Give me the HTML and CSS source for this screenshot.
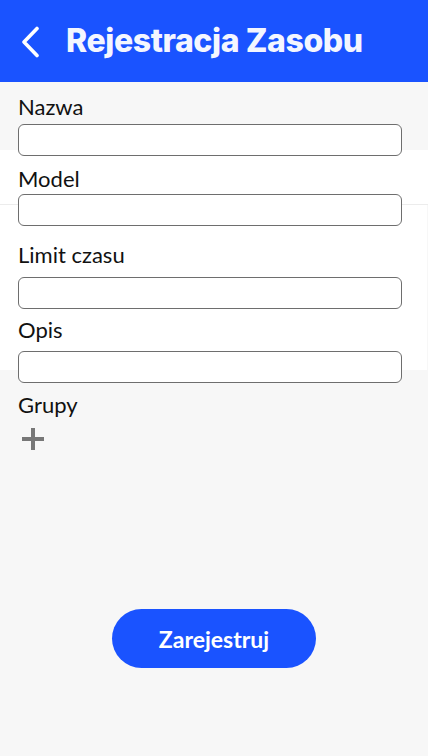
FILE: index.html
```html
<!DOCTYPE html>
<html lang="pl">
<head>
<meta charset="utf-8">
<title>Rejestracja Zasobu</title>
<link rel="stylesheet" href="styles.css">
</head>
<body>
<header class="topbar">
  <button class="back" aria-label="Wstecz">
    <svg width="20" height="32" viewBox="0 0 20 32"><path d="M15 2.5 L2 16 L15 29.5" fill="none" stroke="#fff" stroke-width="3.6" stroke-linecap="round" stroke-linejoin="round"/></svg>
  </button>
  <h1 class="title">Rejestracja Zasobu</h1>
</header>
<main class="form">
  <div class="field field-1">
    <label class="label">Nazwa</label>
    <input class="input" type="text">
  </div>
  <div class="field field-2">
    <label class="label">Model</label>
    <input class="input" type="text">
  </div>
  <div class="field field-3">
    <label class="label">Limit czasu</label>
    <input class="input" type="text">
  </div>
  <div class="field field-4">
    <label class="label">Opis</label>
    <input class="input" type="text">
  </div>
  <div class="groups">
    <span class="label">Grupy</span>
    <button class="add" aria-label="Dodaj grupę">
      <svg width="22" height="24" viewBox="0 0 22 24"><path d="M11 1 V23 M0 12 H22" stroke="#777" stroke-width="4"/></svg>
    </button>
  </div>
  <div class="actions">
    <button class="submit">Zarejestruj</button>
  </div>
</main>
</body>
</html>
```
FILE: styles.css
```css
* { box-sizing: border-box; }
html, body { margin: 0; padding: 0; }
body {
  width: 428px;
  height: 756px;
  overflow: hidden;
  font-family: Lato, "Liberation Sans", sans-serif;
  color: #111;
  background:
    linear-gradient(#fff, #fff) 0 150px / 100% 54px no-repeat,
    linear-gradient(#ececec, #ececec) 0 204px / 100% 1px no-repeat,
    linear-gradient(#fff, #fff) 0 205px / 427px 165px no-repeat,
    #f7f7f7;
}
.topbar {
  height: 82px;
  background: #1a53ff;
  display: flex;
  align-items: center;
  padding-left: 22px;
}
.back {
  background: none;
  border: 0;
  padding: 0;
  width: 20px;
  height: 32px;
  display: flex;
  margin-top: 1px;
}
.title {
  margin: 0 0 0 24px;
  color: #f4f6ff;
  font-family: Inter, "Open Sans", sans-serif;
  font-weight: 800;
  font-size: 32px;
  letter-spacing: -0.4px;
  line-height: 1;
}
.form {
  display: flex;
  flex-direction: column;
  padding: 12px 0 0 18px;
}
.field { display: flex; flex-direction: column; }
.label {
  font-size: 22px;
  line-height: 26px;
  display: block;
}
.input {
  width: 384px;
  height: 32px;
  border: 1px solid #6e6e6e;
  border-radius: 6px;
  background: #fff;
  margin: 0;
  padding: 0 8px;
  font: inherit;
}
.field-1 .input { margin-top: 4px; }
.field-2 { margin-top: 10px; }
.field-2 .input { margin-top: 2px; }
.field-3 { margin-top: 16px; }
.field-3 .input { margin-top: 9px; }
.field-4 { margin-top: 8px; }
.field-4 .input { margin-top: 8px; }
.groups {
  margin-top: 9px;
  display: flex;
  flex-direction: column;
  align-items: flex-start;
}
.add {
  background: none;
  border: 0;
  padding: 0;
  margin: 9px 0 0 4px;
  display: flex;
}
.actions {
  display: flex;
  justify-content: center;
  margin: 158px 0 0 -18px;
}
.submit {
  width: 204px;
  height: 59px;
  border: 0;
  border-radius: 30px;
  background: #1a53ff;
  color: #fff;
  font-family: Lato, sans-serif;
  font-weight: 700;
  font-size: 23px;
  padding: 0;
}
```
